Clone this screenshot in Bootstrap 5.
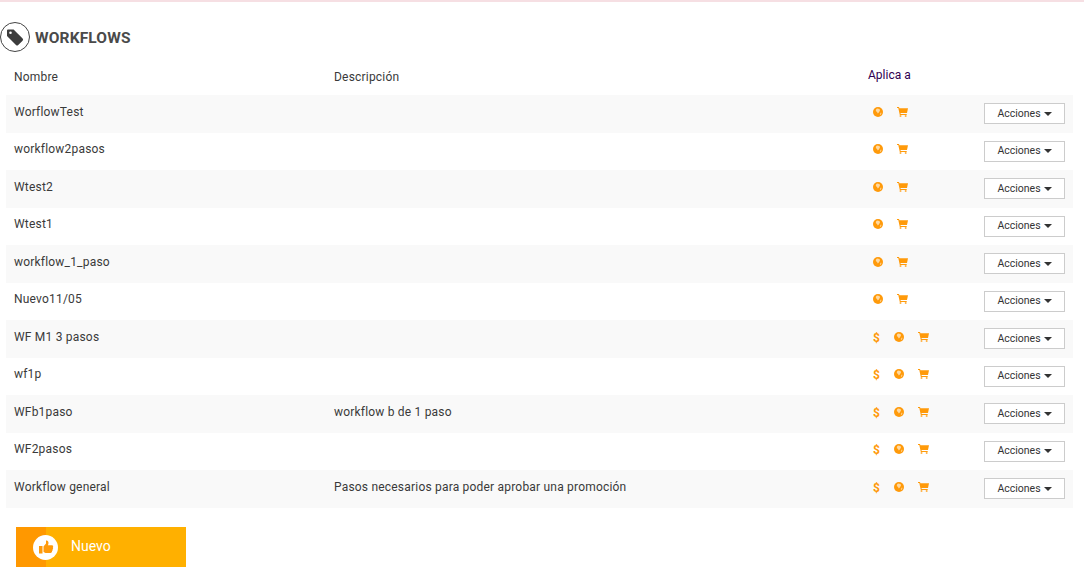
<!DOCTYPE html>
<html lang="es"><head><meta charset="utf-8"><title>Workflows</title>
<link href="https://cdn.jsdelivr.net/npm/bootstrap@5.3.0/dist/css/bootstrap.min.css" rel="stylesheet">
<style>
html,body{height:575px;overflow:hidden}
body{font-family:Roboto,"Liberation Sans",sans-serif;font-size:12px;letter-spacing:.2px;color:#3a3a3a;background:#fff;border-top:2px solid #f6dfe3}
.wf-head{height:30px;margin-top:20px;gap:5px}
.wf-circle{width:30px;height:30px;border:1px solid #444;border-radius:50%}
.wf-title{font-size:15.5px;font-weight:700;letter-spacing:.15px;color:#4a4a4a;margin:0;padding-top:2px}
.wf-table{margin:0 11px 0 6px}
.wf-cols{display:grid;grid-template-columns:320px 534px 1fr 89px;align-items:center;padding-left:8px}
.wf-hrow{height:43px;padding-top:7px}
.wf-row{height:37.5px;align-items:start;padding-top:8px}
.wf-row:nth-child(odd){background:#f9f9f9}
.wf-row .wf-txt{margin-top:-.4px}
.wf-aplica{color:#300050;letter-spacing:0;position:relative;top:-2px}
.wf-icons{gap:14px;padding-left:5px;height:16px;padding-top:4px;margin-top:-.4px}
.wf-icons svg{display:block}
.wf-btn{width:81px;height:21px;border:1px solid #ccc;border-radius:0;background:#fff;color:#333;font-size:10.5px;letter-spacing:0;padding:0;display:flex;align-items:center;justify-content:center;gap:3px}
.wf-btn:after{content:"";border-top:4px solid #333;border-left:4px solid transparent;border-right:4px solid transparent}
.wf-new{width:170px;height:40px;margin:19.500px 0 0 16px;background:linear-gradient(to right,#ff9800 30px,#ffb000 30px);color:#fff;font-size:14px;font-weight:400;border:0;border-radius:0;padding:0 0 0 17px;gap:13px}
.wf-new-txt{margin-bottom:2px}
.wf-thumb{width:25px;height:25px;border-radius:50%;background:#fff}
</style></head><body>
<div class="d-flex align-items-center wf-head">
<span class="wf-circle d-flex align-items-center justify-content-center"><svg width="20" height="20" viewBox="0 0 20 20"><path fill="#3c3c3c" d="M2 2.500h6.600l9 9a1.600 1.600 0 0 1 0 2.200l-4.400 4.400a1.600 1.600 0 0 1-2.200 0l-9-9V3.500a1 1 0 0 1 1-1zM5.500 4.500a1.300 1.300 0 1 0 0 2.600 1.300 1.300 0 0 0 0-2.600z"/></svg></span>
<h1 class="wf-title">WORKFLOWS</h1></div>
<div class="wf-table">
<div class="wf-cols wf-hrow"><span>Nombre</span><span>Descripción</span><span class="wf-aplica">Aplica a</span><span></span></div>
<div id="rows"></div>
</div>
<button class="btn d-flex align-items-center wf-new"><span class="wf-thumb d-flex align-items-center justify-content-center"><svg width="16" height="16" viewBox="0 0 16 16"><path fill="#ff9a0a" d="M1 7h3.500v7.500H1zM5.500 7.500 8 4.500V1.500c1.500-.5 2.500.8 2.500 2.200 0 1-.3 1.800-.6 2.600h4c1.400 0 1.600 1.400.9 2 .6.700.4 1.600-.2 2 .3.800 0 1.500-.6 1.800.2 1-.4 1.900-1.500 1.900H8.500c-1.200 0-2-.5-3-1z"/></svg></span><span class="wf-new-txt">Nuevo</span></button>
<script>
var d=[["WorflowTest","",0],["workflow2pasos","",0],["Wtest2","",0],["Wtest1","",0],["workflow_1_paso","",0],["Nuevo11/05","",0],["WF M1 3 pasos","",1],["wf1p","",1],["WFb1paso","workflow b de 1 paso",1],["WF2pasos","",1],["Workflow general","Pasos necesarios para poder aprobar una promoción",1]];
var globe='<svg width="10" height="10" viewBox="0 0 10 10"><circle cx="5" cy="5" r="5" fill="#ff9a0a"/><path fill="#ffd9a0" d="M4 1.500 6.500 2 7 3.500 5.800 5.500 4.800 6.500 4 5 2.800 4 3 2.500zM7.800 5.500 8.500 6 7.500 8 6.800 7.500z"/></svg>';
var cart='<svg width="11" height="10" viewBox="0 0 11 10"><path fill="#ff9a0a" d="M0 0h2l.4 1.200H11l-1 4.800H3.500l.2 1h6v1H2.800L1.300 1H0z"/><circle cx="3.500" cy="9" r="1" fill="#ffb040"/><circle cx="8.700" cy="9" r="1" fill="#ffb040"/></svg>';
var dollar='<svg width="7" height="12" viewBox="0 0 7 12"><text x="0" y="9.500" font-size="12" font-weight="700" font-family="Roboto" fill="#ff9a0a">$</text></svg>';
document.getElementById('rows').innerHTML=d.map(function(r){return '<div class="wf-cols wf-row"><span class="wf-txt">'+r[0]+'</span><span class="wf-txt">'+r[1]+'</span><span class="d-flex wf-icons">'+(r[2]?dollar:'')+globe+cart+'</span><button class="btn wf-btn">Acciones</button></div>'}).join('');
</script>
<script src="https://cdn.jsdelivr.net/npm/bootstrap@5.3.0/dist/js/bootstrap.bundle.min.js"></script>
</body></html>
